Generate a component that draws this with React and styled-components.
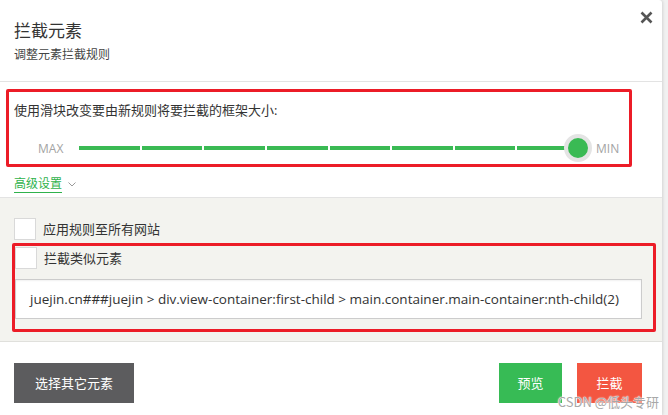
import React from "react";
import styled, { createGlobalStyle } from "styled-components";

const GlobalStyle = createGlobalStyle`
  html, body {
    margin: 0;
    padding: 0;
    background: #f1f1f1;
    font-family: "Open Sans", "Noto Sans CJK SC", sans-serif;
  }
`;

const Dialog = styled.div`
  position: relative;
  width: 662px;
  height: 415px;
  background: #ffffff;
  border-radius: 0 3px 0 0;
  box-shadow: 1px 0 3px rgba(0, 0, 0, 0.12);
  display: flex;
  flex-direction: column;
  overflow: hidden;
  color: #333333;
`;

const Header = styled.div`
  position: relative;
  box-sizing: border-box;
  height: 82px;
  padding: 20px 14px 0 14px;
  border-bottom: 1px solid #e3e3e3;
`;

const Title = styled.div`
  font-size: 17px;
  line-height: 22px;
  color: #333333;
`;

const Subtitle = styled.div`
  margin-top: 5px;
  font-size: 12px;
  line-height: 16px;
  color: #444444;
`;

const CloseButton = styled.button`
  position: absolute;
  top: 11px;
  right: 9px;
  width: 13px;
  height: 13px;
  padding: 0;
  border: none;
  background: none;
  cursor: pointer;
  display: flex;
`;

const SliderSection = styled.div`
  box-sizing: border-box;
  height: 116px;
  padding: 7px 0 0 6px;
  border-bottom: 1px solid #e3e3e3;
`;

const Highlight = styled.div`
  box-sizing: border-box;
  width: ${(p) => p.width}px;
  border: 3px solid #ec1c27;
  border-radius: 2px;
  margin-top: ${(p) => p.top || 0}px;
`;

const Prompt = styled.div`
  padding: 9px 0 0 5px;
  font-size: 13px;
  line-height: 18px;
  color: #333333;
`;

const SliderRow = styled.div`
  display: flex;
  align-items: center;
  height: 28px;
  margin: 15px 0 2px 0;
  padding-left: 29px;
`;

const EndLabel = styled.span`
  font-size: 12px;
  color: #a3a3a3;
  width: ${(p) => p.width || "auto"};
  margin-left: ${(p) => p.left || 0}px;
`;

const Track = styled.div`
  position: relative;
  width: 499px;
  height: 4px;
  display: flex;
  gap: 2px;
`;

const Segment = styled.div`
  flex: 1;
  background: #3aba54;
`;

const Knob = styled.div`
  position: absolute;
  right: -14px;
  top: 50%;
  transform: translateY(-50%);
  width: 20px;
  height: 20px;
  border-radius: 50%;
  background: #3aba54;
  border: 4px solid #e4e4e4;
`;

const AdvancedRow = styled.div`
  display: flex;
  align-items: center;
  gap: 6px;
  margin: 9px 0 0 8px;
`;

const AdvancedLink = styled.a`
  font-size: 12px;
  line-height: 16px;
  color: #2fb24c;
  text-decoration: none;
  border-bottom: 1px solid #2fb24c;
`;

const OptionsSection = styled.div`
  box-sizing: border-box;
  height: 144px;
  background: #f3f3ef;
  border-bottom: 1px solid #e0e0dc;
  padding: 20px 0 0 12px;
`;

const CheckRow = styled.label`
  display: flex;
  align-items: center;
  gap: 7px;
  margin: ${(p) => p.margin || "0"};
  font-size: 13px;
  line-height: 22px;
  color: #333333;
`;

const Box = styled.span`
  box-sizing: border-box;
  width: 22px;
  height: 22px;
  background: #ffffff;
  border: 1px solid #d9d9d9;
`;

const SelectorField = styled.div`
  box-sizing: border-box;
  width: 627px;
  height: 40px;
  margin: 10px 0 10px 0;
  padding-left: 14px;
  background: #ffffff;
  border: 1px solid #cccccc;
  box-shadow: inset 0 1px 2px rgba(0, 0, 0, 0.06);
  font-size: 13.5px;
  line-height: 38px;
  color: #333333;
  white-space: nowrap;
  overflow: hidden;
`;

const Footer = styled.div`
  flex: 1;
  display: flex;
  justify-content: space-between;
  align-items: flex-start;
  padding: 21px 20px 0 14px;
`;

const ButtonGroup = styled.div`
  display: flex;
  gap: 15px;
`;

const Button = styled.button`
  height: 40px;
  width: ${(p) => p.width}px;
  border: none;
  border-radius: 0;
  background: ${(p) => p.bg};
  color: #ffffff;
  font-family: "Noto Sans CJK SC", sans-serif;
  font-size: 13px;
  line-height: 16px;
  cursor: pointer;
`;

const Watermark = styled.div`
  position: absolute;
  right: 3px;
  bottom: 5px;
  font-family: "Noto Sans CJK SC", sans-serif;
  font-size: 13px;
  line-height: 16px;
  color: #a8a8a8;
  text-shadow: 0 0 2px #ffffff, 0 0 1px #ffffff, 0 0 1px #ffffff;
`;

export default function App() {
  return (
    <>
      <GlobalStyle />
      <Dialog>
        <Header>
          <Title>拦截元素</Title>
          <Subtitle>调整元素拦截规则</Subtitle>
          <CloseButton aria-label="关闭">
            <svg width="13" height="13" viewBox="0 0 13 13">
              <path d="M1.5 1.5 L11.5 11.5 M11.5 1.5 L1.5 11.5" stroke="#555" strokeWidth="2.6" />
            </svg>
          </CloseButton>
        </Header>

        <SliderSection>
          <Highlight width={626}>
            <Prompt>使用滑块改变要由新规则将要拦截的框架大小:</Prompt>
            <SliderRow>
              <EndLabel width="41px">MAX</EndLabel>
              <Track>
                {Array.from({ length: 8 }).map((_, i) => (
                  <Segment key={i} />
                ))}
                <Knob />
              </Track>
              <EndLabel left={18}>MIN</EndLabel>
            </SliderRow>
          </Highlight>
          <AdvancedRow>
            <AdvancedLink>高级设置</AdvancedLink>
            <svg width="8" height="5" viewBox="0 0 8 5">
              <path d="M0.5 0.5 L4 4 L7.5 0.5" fill="none" stroke="#9a9a9a" strokeWidth="1" />
            </svg>
          </AdvancedRow>
        </SliderSection>

        <OptionsSection>
          <CheckRow margin="0 0 0 2px">
            <Box />
            应用规则至所有网站
          </CheckRow>
          <Highlight width={644} top={3}>
            <CheckRow margin="1px 0 0 0">
              <Box />
              拦截类似元素
            </CheckRow>
            <SelectorField>
              juejin.cn###juejin &gt; div.view-container:first-child &gt; main.container.main-container:nth-child(2)
            </SelectorField>
          </Highlight>
        </OptionsSection>

        <Footer>
          <Button width={120} bg="#5c5c5e">选择其它元素</Button>
          <ButtonGroup>
            <Button width={63} bg="#37bb55">预览</Button>
            <Button width={65} bg="#f35641">拦截</Button>
          </ButtonGroup>
        </Footer>
        <Watermark>CSDN @低头专研</Watermark>
      </Dialog>
    </>
  );
}
